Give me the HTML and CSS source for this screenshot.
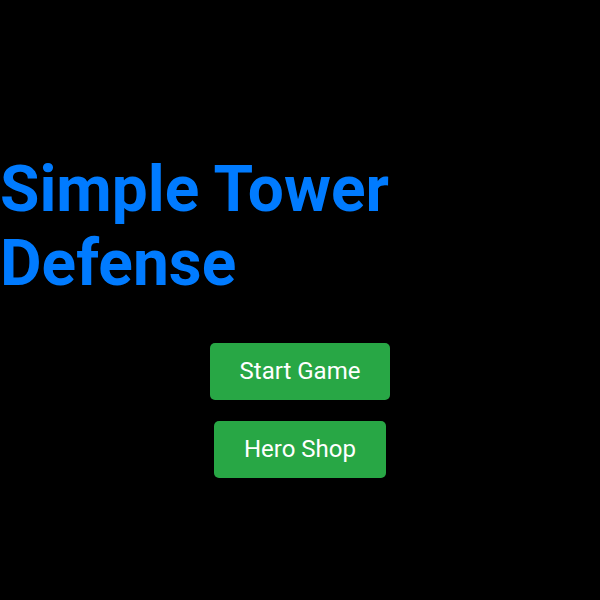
FILE: index.html
```html
<!DOCTYPE html>
<html lang="en">
<head>
<meta charset="utf-8">
<title>Simple Tower Defense</title>
<link rel="stylesheet" href="styles.css">
</head>
<body>
<main class="menu">
  <h1 class="menu-title">Simple Tower Defense</h1>
  <div class="menu-actions">
    <button class="menu-btn" type="button">Start Game</button>
    <button class="menu-btn" type="button">Hero Shop</button>
  </div>
</main>
</body>
</html>
```

FILE: styles.css
```css
html, body {
  margin: 0;
  padding: 0;
  background: #000;
  height: 100%;
}

body {
  font-family: Roboto, "Liberation Sans", sans-serif;
}

.menu {
  display: flex;
  flex-direction: column;
  padding-top: 153px;
}

.menu-title {
  margin: 0;
  width: 400px;
  color: #007bff;
  font-size: 64px;
  font-weight: 700;
  line-height: 1.15;
}

.menu-actions {
  display: flex;
  flex-direction: column;
  align-items: center;
  gap: 21px;
  margin-top: 43px;
}

.menu-btn {
  font-family: inherit;
  font-size: 24px;
  line-height: 33px;
  padding: 12px 30px;
  color: #fff;
  background: #28a745;
  border: none;
  border-radius: 5px;
}
```
